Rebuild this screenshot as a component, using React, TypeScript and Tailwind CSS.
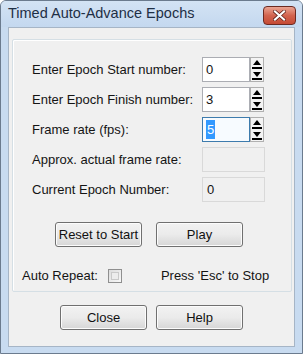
import React from "react";

function Spinner() {
  return (
    <div className="w-[14px] h-[25px] flex flex-col bg-[#f4f4f4] border border-[#b0b0b0]">
      <svg width="12" height="23" viewBox="0 0 12 23">
        <polygon points="6,2 10,7 2,7" fill="#000" />
        <rect x="1" y="9" width="10" height="2" fill="#000" />
        <polygon points="2,14 10,14 6,19" fill="#000" />
        <rect x="1" y="20" width="10" height="2" fill="#000" />
      </svg>
    </div>
  );
}

function Btn({ label, w }: { label: string; w: string }) {
  return (
    <button
      className={`${w} h-[25px] rounded-[3px] border border-[#707070] bg-gradient-to-b from-[#f2f2f2] via-[#ebebeb] to-[#d6d6d6] text-[13px] text-[#111] shadow-[inset_0_0_0_1px_#fcfcfc]`}
    >
      {label}
    </button>
  );
}

export default function App() {
  const font = { fontFamily: '"Liberation Sans", Arial, sans-serif' };
  return (
    <div
      className="w-[303px] h-[354px] flex flex-col bg-[#c8dbf0] border border-[#6b7b8e] rounded-t-[6px] overflow-hidden"
      style={font}
    >
      {/* title bar */}
      <div className="h-[26px] flex items-center justify-between pl-[7px] pr-[6px] bg-gradient-to-b from-[#d3e3f4] to-[#c4d8ef]">
        <span className="text-[14.5px] text-[#1e2f45]">Timed Auto-Advance Epochs</span>
        <div className="w-[33px] h-[19px] mt-[2px] rounded-[4px] border border-[#6b2a22] bg-gradient-to-b from-[#e9a493] via-[#d2644f] to-[#c54a34] flex items-center justify-center">
          <svg width="13" height="11" viewBox="0 0 13 11">
            <path d="M2 1.5 L11 9.5 M11 1.5 L2 9.5" stroke="#5a1e16" strokeWidth="3.6" strokeLinecap="square" />
            <path d="M2 1.5 L11 9.5 M11 1.5 L2 9.5" stroke="#fff" strokeWidth="2.2" strokeLinecap="square" />
          </svg>
        </div>
      </div>

      {/* client area */}
      <div className="flex-1 mx-[7px] mb-[6px] bg-[#f0f0f0] border border-[#a6b5c6] flex flex-col">
        {/* group box */}
        <div className="mt-[11px] ml-[3px] mr-[2px] h-[253px] border border-[#d5dfe5] rounded-[2px] shadow-[inset_1px_1px_0_#fff] flex flex-col pl-[19px] pt-[17px] text-[13px] text-[#141414]">
          <div className="flex flex-col gap-[5px]">
            <div className="flex items-center h-[25px]">
              <span className="w-[170px]">Enter Epoch Start number:</span>
              <div className="w-[48px] h-[25px] bg-white border border-[#abadb3] flex items-center pl-[3px]">0</div>
              <Spinner />
            </div>
            <div className="flex items-center h-[25px]">
              <span className="w-[170px]">Enter Epoch Finish number:</span>
              <div className="w-[48px] h-[25px] bg-white border border-[#abadb3] flex items-center pl-[3px]">3</div>
              <Spinner />
            </div>
            <div className="flex items-center h-[25px]">
              <span className="w-[170px]">Frame rate (fps):</span>
              <div className="w-[48px] h-[25px] bg-[#f7fbff] border border-[#3d7bad] flex items-center pl-[3px]">
                <span className="bg-[#3399ff] text-white px-[1px]">5</span>
              </div>
              <Spinner />
            </div>
            <div className="flex items-center h-[25px]">
              <span className="w-[170px]">Approx. actual frame rate:</span>
              <div className="w-[63px] h-[25px] bg-[#f0f0f0] border border-[#d9d9d9]" />
            </div>
            <div className="flex items-center h-[25px]">
              <span className="w-[170px]">Current Epoch Number:</span>
              <div className="w-[63px] h-[25px] bg-[#f0f0f0] border border-[#d9d9d9] flex items-center pl-[4px]">0</div>
            </div>
          </div>

          <div className="flex gap-[14px] ml-[23px] mt-[20px]">
            <Btn label="Reset to Start" w="w-[87px]" />
            <Btn label="Play" w="w-[87px]" />
          </div>

          <div className="flex items-center mt-[21px] -ml-[10px] h-[16px]">
            <span>Auto Repeat:</span>
            <div className="ml-[10px] w-[14px] h-[14px] border border-[#8f8f8f] bg-gradient-to-br from-[#dcdcdc] to-[#f8f8f8] p-[2px]">
              <div className="w-full h-full border border-[#c9c9c9] bg-[#ececec]" />
            </div>
            <span className="ml-[39px]">Press 'Esc' to Stop</span>
          </div>
        </div>

        <div className="flex gap-[9px] ml-[51px] mt-[13px]">
          <Btn label="Close" w="w-[87px]" />
          <Btn label="Help" w="w-[87px]" />
        </div>
      </div>
    </div>
  );
}
